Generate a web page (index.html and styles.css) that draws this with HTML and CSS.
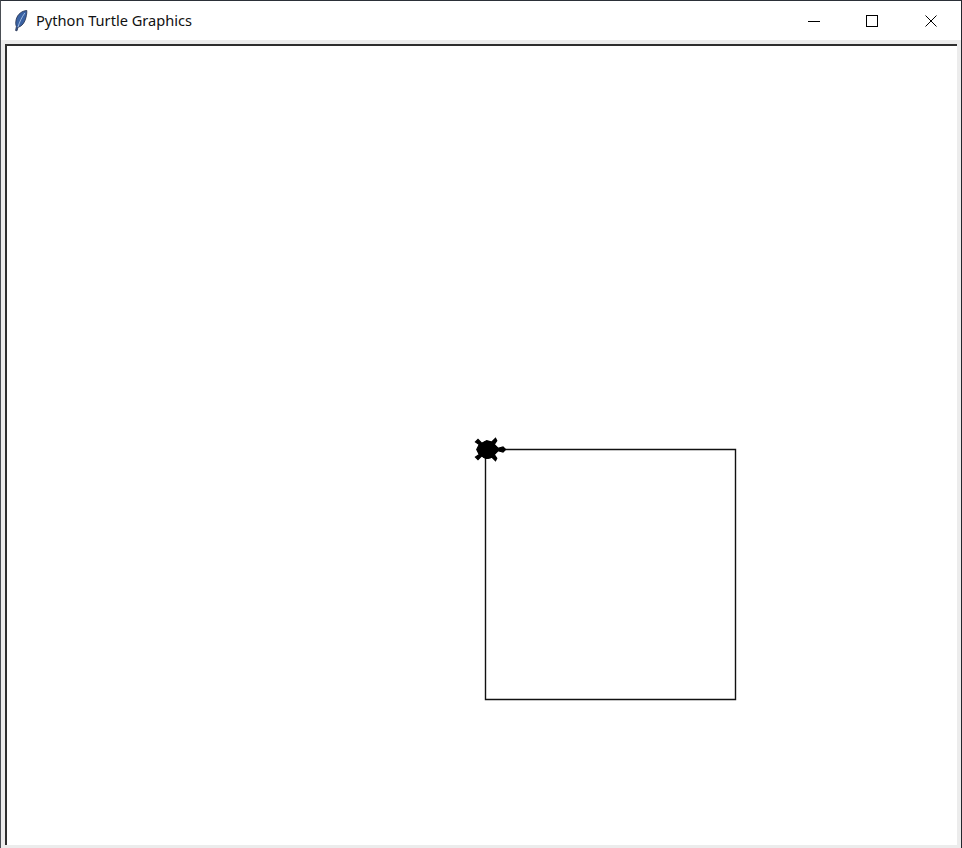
FILE: index.html
```html
<!DOCTYPE html>
<html lang="en">
<head>
    <meta charset="UTF-8">
    <title>Python Turtle Graphics</title>
    <link rel="stylesheet" href="styles.css">
</head>
<body>
    <div class="window">
        <div class="titlebar">
            <svg class="app-icon" width="14" height="22" viewBox="0 0 14 22">
                <path d="M12.8 0.5C8 0.8 3.8 4 2.3 9C1.5 12 1.5 14.5 2.4 16.5L1.6 20.5L3 20.8L4 17.2C7 16.8 9.6 14 11 10.5C12.3 7 13 3.5 12.8 0.5Z" fill="#3a62a3" stroke="#232f4b" stroke-width="0.8"/>
                <path d="M10.8 3C8 7 5.6 11.5 4 17" fill="none" stroke="#a9c3e6" stroke-width="0.9"/>
            </svg>
            <span class="title">Python Turtle Graphics</span>
            <div class="controls">
                <button class="control" type="button" aria-label="Minimize">
                    <svg width="12" height="12" viewBox="0 0 12 12"><path d="M0 6.5H12" stroke="#000" fill="none"/></svg>
                </button>
                <button class="control" type="button" aria-label="Maximize">
                    <svg width="12" height="12" viewBox="0 0 12 12"><rect x="0.5" y="0.5" width="11" height="11" stroke="#000" fill="none"/></svg>
                </button>
                <button class="control" type="button" aria-label="Close">
                    <svg width="12" height="12" viewBox="0 0 12 12"><path d="M0.5 0.5L11.5 11.5M11.5 0.5L0.5 11.5" stroke="#000" fill="none"/></svg>
                </button>
            </div>
        </div>
        <div class="content">
            <div class="canvas">
                <svg class="drawing" width="100%" height="100%">
                    <g transform="translate(478.5 403.5)">
                        <path class="track" d="M0 0H250V250H0Z"/>
                        <polygon class="turtle" transform="scale(1.25)" points="16,0 14,-2 10,-1 7,-4 9,-7 8,-9 5,-6 1,-7 -3,-5 -6,-8 -8,-6 -5,-4 -7,0 -5,4 -8,6 -6,8 -3,5 1,7 5,6 8,9 9,7 7,4 10,1 14,2"/>
                        <circle class="turtle" cx="2" cy="0.5" r="8.5"/>
                    </g>
                </svg>
            </div>
        </div>
    </div>
</body>
</html>
```

FILE: styles.css
```css
html, body {
    height: 100%;
}
body {
    margin: 0;
    background-color: #fff;
    font-family: "Noto Sans", "Open Sans", sans-serif;
    overflow: hidden;
}
.window {
    display: flex;
    flex-direction: column;
    height: 100vh;
    box-sizing: border-box;
    border-top: 1px solid #2b3038;
    border-left: 1px solid #4a4e54;
    border-right: 1px solid #23272e;
}
.titlebar {
    display: flex;
    align-items: center;
    height: 39px;
    padding-left: 13px;
    background-color: #fff;
    flex-shrink: 0;
}
.app-icon {
    margin-right: 8px;
}
.title {
    font-size: 14.6px;
    color: #111;
    margin-bottom: 2px;
}
.controls {
    display: flex;
    margin-left: auto;
    padding-right: 1px;
}
.control {
    display: flex;
    justify-content: center;
    align-items: center;
    width: 58.5px;
    height: 39px;
    padding: 0;
    border: none;
    background: none;
}
.content {
    flex: 1;
    display: flex;
    min-height: 0;
    padding: 4px 4px 3px 4px;
    background-color: #ececec;
}
.canvas {
    flex: 1;
    min-width: 0;
    background-color: #fff;
    border-top: 2px solid #2e2e2e;
    border-left: 2px solid #2e2e2e;
}
.drawing {
    display: block;
}
.track {
    fill: none;
    stroke: #111;
    stroke-width: 1.4;
}
.turtle {
    fill: #000;
    stroke: #000;
}
```
